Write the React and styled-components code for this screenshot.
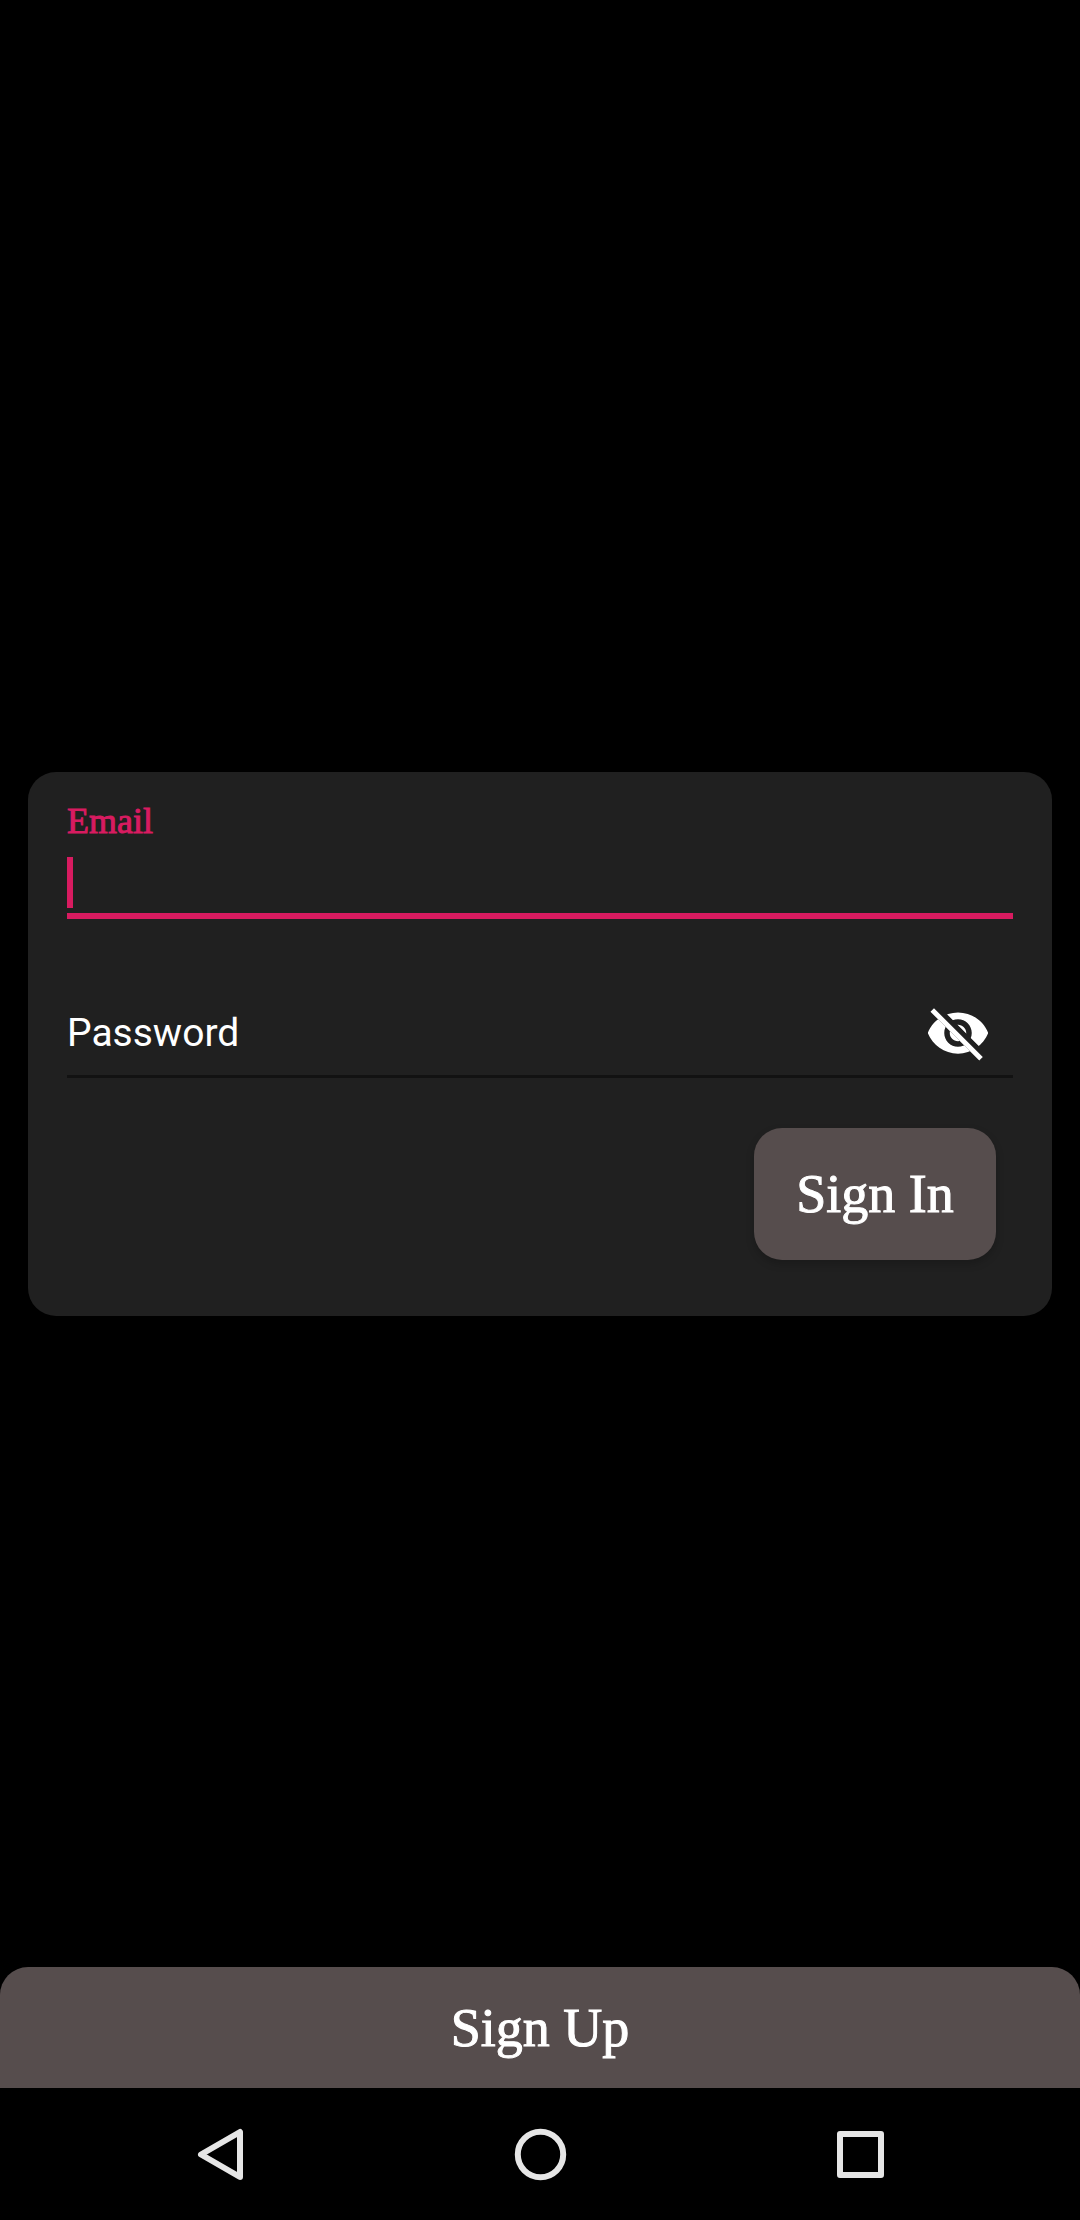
import React, { useState } from "react";
import styled, { createGlobalStyle } from "styled-components";

const accent = "#d81b60";
const serif = '"Liberation Serif", "Times New Roman", serif';

const GlobalStyle = createGlobalStyle`
  *, *::before, *::after { box-sizing: border-box; }
  body { margin: 0; background: #000; }
  button, input { font: inherit; color: inherit; }
`;

const Screen = styled.div`
  display: flex;
  flex-direction: column;
  min-height: 100vh;
  background: #000;
  color: #fff;
  font-family: Roboto, "Noto Sans", sans-serif;
`;

const Main = styled.main`
  flex: 1;
  display: grid;
  grid-template-rows: 1fr auto 1fr;
`;

const Card = styled.form`
  grid-row: 2;
  display: flex;
  flex-direction: column;
  margin: 0 28px;
  padding: 27px 39px 56px;
  border-radius: 28px;
  background: #202020;
`;

const FloatingLabel = styled.label`
  align-self: flex-start;
  color: ${accent};
  font: 36px/44px ${serif};
  -webkit-text-stroke: 1px ${accent};
`;

const Field = styled.div`
  display: flex;
  align-items: ${(p) => (p.$active ? "flex-end" : "center")};
  height: ${(p) => (p.$active ? 76 : 88)}px;
  padding-bottom: ${(p) => (p.$active ? 5 : 0)}px;
  margin-top: ${(p) => (p.$active ? 0 : 71)}px;
  border-bottom: ${(p) => (p.$active ? `6px solid ${accent}` : "3px solid #121212")};
`;

const Caret = styled.span`
  width: 6px;
  height: 51px;
  background: ${accent};
`;

const InlineLabel = styled.label`
  font-size: 39px;
  line-height: 44px;
`;

const TextInput = styled.input`
  flex: 1;
  min-width: 0;
  height: 51px;
  padding: 0;
  border: 0;
  outline: 0;
  background: transparent;
  caret-color: transparent;
  font-size: 39px;
`;

const IconButton = styled.button`
  display: flex;
  margin-right: 22px;
  padding: 0;
  border: 0;
  background: none;
`;

const ActionButton = styled.button`
  border: 0;
  background: #564d4d;
  color: #fff;
  font: 54px/60px ${serif};
  -webkit-text-stroke: 1px #fff;
`;

const SignInButton = styled(ActionButton)`
  align-self: flex-end;
  min-width: 242px;
  height: 132px;
  margin: 50px 17px 0 0;
  border-radius: 28px;
  box-shadow: 0 4px 8px rgba(0, 0, 0, 0.2);
`;

const SignUpButton = styled(ActionButton)`
  grid-row: 3;
  align-self: end;
  height: 121px;
  border-radius: 28px 28px 0 0;
`;

const NavBar = styled.nav`
  display: flex;
  height: 132px;
  padding: 0 60px;
`;

const NavButton = styled.button`
  flex: 1;
  display: flex;
  align-items: center;
  justify-content: center;
  padding: 0;
  border: 0;
  background: none;
`;

const NavIcon = ({ children }) => (
  <svg width="66" height="66" viewBox="0 0 66 66" fill="none" stroke="#e6e6e6" strokeWidth="6" strokeLinejoin="round" aria-hidden="true">
    {children}
  </svg>
);

const EyeOffIcon = () => (
  <svg width="66" height="66" viewBox="0 0 24 24" aria-hidden="true">
    <clipPath id="eye-cut">
      <path d="M2,4.27L19.73,22L22.27,19.46L4.54,1.73V1H23V23H1V4.27Z" />
    </clipPath>
    <path
      clipPath="url(#eye-cut)"
      fill="#fff"
      d="M12,4.5C7,4.5 2.73,7.61 1,12c1.73,4.39 6,7.5 11,7.5s9.27,-3.11 11,-7.5c-1.73,-4.39 -6,-7.5 -11,-7.5zM12,17c-2.76,0 -5,-2.24 -5,-5s2.24,-5 5,-5 5,2.24 5,5 -2.24,5 -5,5zM12,9c-1.66,0 -3,1.34 -3,3s1.34,3 3,3 3,-1.34 3,-3 -1.34,-3 -3,-3z"
    />
    <path d="M3.27,4.27L19.74,20.74" stroke="#fff" strokeWidth="1.8" strokeLinecap="square" />
  </svg>
);

export default function App() {
  const [visible, setVisible] = useState(false);
  return (
    <Screen>
      <GlobalStyle />
      <Main>
        <Card onSubmit={(e) => e.preventDefault()}>
          <FloatingLabel htmlFor="email">Email</FloatingLabel>
          <Field $active>
            <Caret />
            <TextInput id="email" type="email" />
          </Field>
          <Field>
            <InlineLabel htmlFor="password">Password</InlineLabel>
            <TextInput id="password" type={visible ? "text" : "password"} />
            <IconButton type="button" aria-label="Show password" onClick={() => setVisible(!visible)}>
              <EyeOffIcon />
            </IconButton>
          </Field>
          <SignInButton type="submit">Sign In</SignInButton>
        </Card>
        <SignUpButton type="button">Sign Up</SignUpButton>
      </Main>
      <NavBar>
        <NavButton type="button" aria-label="Back">
          <NavIcon><path d="M14 33.5L53 11V56Z" /></NavIcon>
        </NavButton>
        <NavButton type="button" aria-label="Home">
          <NavIcon><circle cx="33.5" cy="33.5" r="22.7" /></NavIcon>
        </NavButton>
        <NavButton type="button" aria-label="Recent apps">
          <NavIcon><rect x="13" y="13" width="41" height="41" /></NavIcon>
        </NavButton>
      </NavBar>
    </Screen>
  );
}
